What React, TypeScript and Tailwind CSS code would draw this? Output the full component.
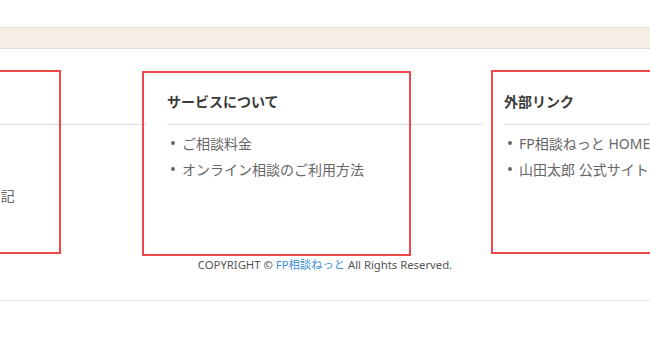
const columns = [
  {
    title: "FP相談ねっとについて",
    items: ["プロフィール", "事務所概要", "FP山田太郎のお金相談日記"],
  },
  {
    title: "サービスについて",
    items: ["ご相談料金", "オンライン相談のご利用方法"],
  },
  {
    title: "外部リンク",
    items: ["FP相談ねっと HOME", "山田太郎 公式サイト"],
  },
];

function FooterColumn({ title, items }: { title: string; items: string[] }) {
  return (
    <div className="w-[316px] shrink-0">
      <h3 className="text-[14px] leading-[20px] font-bold text-[#3a3a3a] pb-[12px] border-b border-[#dcdcdc] whitespace-nowrap">
        {title}
      </h3>
      <ul className="mt-[5px]">
        {items.map((item) => (
          <li
            key={item}
            className="flex items-center h-[26px] text-[14px] text-[#666] whitespace-nowrap"
          >
            <span className="w-[4px] h-[4px] rounded-full bg-[#666] ml-[4px] mr-[7px] shrink-0" />
            {item}
          </li>
        ))}
      </ul>
    </div>
  );
}

export default function App() {
  return (
    <div
      className="relative w-[650px] h-[342px] overflow-hidden bg-white"
      style={{ fontFamily: '"Noto Sans", "Noto Sans CJK JP", sans-serif' }}
    >
      <div className="h-[27px]" />
      <div className="h-[22px] bg-[#f5eee5] border-t border-[#ece6df] border-b border-b-[#e6ddd3]" />

      <footer className="border-b border-[#ececec]">
        <div className="flex justify-center gap-[21px] pt-[43px]">
          {columns.map((col) => (
            <FooterColumn key={col.title} title={col.title} items={col.items} />
          ))}
        </div>
        <p className="mt-[49px] pb-[27px] text-center text-[11.3px] leading-[16px] text-[#555]">
          COPYRIGHT © <a className="text-[#3b8ed8]">FP相談ねっと</a> All Rights Reserved.
        </p>
      </footer>

      {/* highlight boxes */}
      <div className="absolute left-[-10px] top-[70px] w-[71px] h-[184px] border-2 border-[#f34848] pointer-events-none" />
      <div className="absolute left-[142px] top-[71px] w-[269px] h-[185px] border-2 border-[#f34848] pointer-events-none" />
      <div className="absolute left-[491px] top-[70px] w-[200px] h-[184px] border-2 border-[#f34848] pointer-events-none" />
    </div>
  );
}
